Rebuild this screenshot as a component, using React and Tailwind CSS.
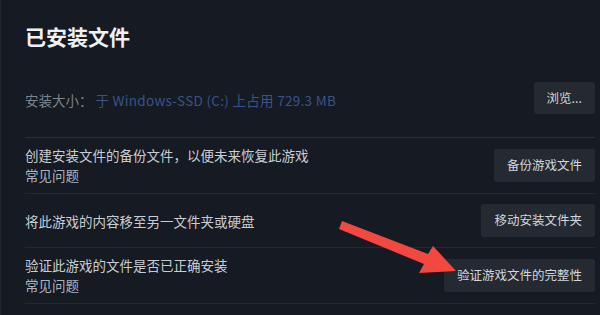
const Btn = ({ children }) => (
  <button className="h-[33px] shrink-0 rounded-[3px] bg-[#252932] px-[13px] text-[12.5px] leading-none text-[#d3d6db]">
    {children}
  </button>
);

export default function App() {
  return (
    <div className="relative min-h-screen w-full overflow-hidden border-l border-[#22262e] bg-[#161a23] pl-6 pr-[5px] pt-[22px] font-['Noto_Sans_CJK_SC','Noto_Sans',sans-serif]">
      <h1 className="text-[21px] font-bold leading-[28px] text-[#eef0f3]">已安装文件</h1>

      <div className="flex items-center justify-between border-b border-[#2a2f39] pb-[23px] pt-[32px]">
        <p className="mt-[3px] text-[13.5px] leading-[18px] text-[#7d828b]">
          安装大小：
          <span className="ml-[3px] tracking-[0.3px] text-[#3b5386]">于 Windows-SSD (C:) 上占用 729.3 MB</span>
        </p>
        <button className="h-[32px] shrink-0 rounded-[3px] bg-[#252932] px-[13px] text-[12.5px] leading-none text-[#d3d6db]">
          浏览...
        </button>
      </div>

      <div className="flex h-[56px] items-center justify-between border-b border-[#232832]">
        <div className="text-[13.5px] leading-[19.5px]">
          <p className="text-[#c9cdd3]">创建安装文件的备份文件，以便未来恢复此游戏</p>
          <p className="text-[#aeb2b9]">常见问题</p>
        </div>
        <Btn>备份游戏文件</Btn>
      </div>

      <div className="flex h-[54px] items-center justify-between border-b border-[#232832]">
        <p className="mt-[2px] text-[13.5px] leading-[19.5px] text-[#c9cdd3]">将此游戏的内容移至另一文件夹或硬盘</p>
        <Btn>移动安装文件夹</Btn>
      </div>

      <div className="flex h-[56px] items-center justify-between border-b border-[#232832]">
        <div className="text-[13.5px] leading-[19.5px]">
          <p className="text-[#c9cdd3]">验证此游戏的文件是否已正确安装</p>
          <p className="text-[#aeb2b9]">常见问题</p>
        </div>
        <Btn>验证游戏文件的完整性</Btn>
      </div>

      <svg
        className="pointer-events-none absolute left-0 top-0"
        width="600"
        height="315"
        viewBox="0 0 600 315"
      >
        <polygon
          points="341,221 427,254 432,246 455,271 418,273 423,264 338,229"
          fill="#f24840"
        />
      </svg>
    </div>
  );
}
